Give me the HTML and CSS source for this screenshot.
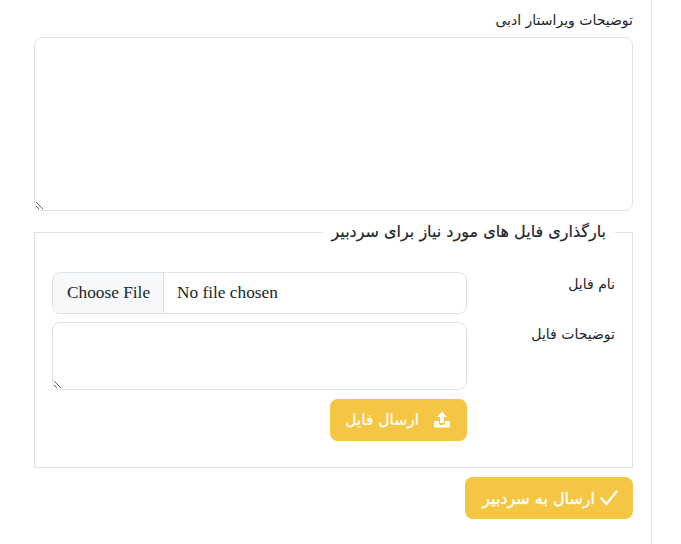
FILE: index.html
```html
<!DOCTYPE html>
<html lang="fa" dir="rtl">
<head>
    <meta charset="UTF-8">
    <title>ارسال به سردبیر</title>
    <link rel="stylesheet" href="styles.css">
</head>
<body>
    <div class="panel">
        <label class="main-label" for="notes">توضیحات ویراستار ادبی</label>
        <textarea class="main-notes" id="notes"></textarea>

        <fieldset class="upload-box">
            <legend>بارگذاری فایل های مورد نیاز برای سردبیر</legend>

            <div class="upload-row">
                <label for="file-name">نام فایل</label>
                <input type="file" id="file-name" dir="ltr">
            </div>
            <div class="upload-row upload-row-notes">
                <label for="file-notes">توضیحات فایل</label>
                <textarea id="file-notes"></textarea>
            </div>
            <div class="upload-row upload-row-btn">
                <span></span>
                <div>
                    <button type="button" class="btn btn-upload">
                        <svg width="18" height="18" viewBox="0 0 18 18"><path fill="#fff" d="M9 0.500 14 6H11V12H7V6H4ZM1 11.500C1 10.700 1.700 10 2.500 10H6V12.500C6 13.300 6.700 14 7.500 14H10.500C11.300 14 12 13.300 12 12.500V10H15.500C16.300 10 17 10.700 17 11.500V15C17 15.800 16.300 16.500 15.500 16.500H2.500C1.700 16.500 1 15.800 1 15Z"/></svg>
                        <span>ارسال فایل</span>
                    </button>
                </div>
            </div>
        </fieldset>

        <div class="send-row">
            <button type="button" class="btn btn-send">
                <svg width="18" height="16" viewBox="0 0 18 16"><path fill="none" stroke="#fff" stroke-width="2.400" stroke-linecap="round" d="M1.500 8.500 6.500 14 16.500 1.500"/></svg>
                <span>ارسال به سردبیر</span>
            </button>
        </div>
    </div>
</body>
</html>
```

FILE: styles.css
```css
/* base */
html, body {
    height: 544px;
    overflow: hidden;
}
body {
    margin: 0;
    background-color: #fff;
    color: #212529;
    font-family: "DejaVu Sans", "Noto Sans", sans-serif;
    font-size: 14px;
}
.panel {
    box-sizing: border-box;
    width: 652px;
    height: 544px;
    margin-left: 0;
    margin-right: auto;
    padding: 12px 18px 0 34px;
    border-right: 1px solid #e2e2e2;
    display: flex;
    flex-direction: column;
    align-items: stretch;
}
.main-label {
    display: block;
    height: 25px;
    line-height: 17px;
    font-size: 14px;
}
textarea {
    display: block;
    box-sizing: border-box;
    width: 100%;
    border: 1px solid #dee2e6;
    border-radius: 8px;
    background-color: #fff;
    outline: none;
}
.main-notes {
    height: 174px;
}
/* upload */
.upload-box {
    box-sizing: border-box;
    height: 247px;
    margin: 10px 0 0 0;
    padding: 29px 17px 0 17px;
    border: 1px solid #dee2e6;
    min-inline-size: 0;
}
.upload-box legend {
    margin-right: 0;
    padding: 0 9px;
    font-size: 16px;
    line-height: 22px;
    -webkit-text-stroke: 0.2px #212529;
}
.upload-row {
    display: grid;
    grid-template-columns: 148px 415px;
}
.upload-row label {
    padding-top: 4px;
    font-size: 14px;
    line-height: 17px;
}
.upload-row-notes {
    margin-top: 8px;
}
.upload-row-notes textarea {
    height: 68px;
}
.upload-row-btn {
    margin-top: 9px;
}
input[type="file"] {
    box-sizing: border-box;
    width: 100%;
    height: 42px;
    padding: 0;
    border: 1px solid #dee2e6;
    border-radius: 8px;
    background-color: #fff;
    color: #212529;
    font-family: "Liberation Serif", serif;
    font-size: 17.300px;
    line-height: 40px;
}
input[type="file"]::file-selector-button {
    height: 40px;
    margin: 0 13px 0 0;
    padding: 0 13px 0 14px;
    border: none;
    border-right: 1px solid #dee2e6;
    background-color: #f6f8fa;
    color: #212529;
    font: inherit;
}
/* buttons */
.btn {
    display: flex;
    align-items: center;
    box-sizing: border-box;
    height: 42px;
    border: none;
    border-radius: 8px;
    background-color: #f4c644;
    color: #fff;
    font-family: inherit;
    cursor: pointer;
}
.btn-upload {
    width: 137px;
    padding: 0 16px 0 0;
    gap: 14px;
    font-size: 15.500px;
    -webkit-text-stroke: 0.2px #fff;
}
.send-row {
    display: flex;
    justify-content: flex-start;
    margin-top: 9px;
}
.btn-send {
    width: 168px;
    padding: 0 15px 0 0;
    gap: 5px;
    font-size: 16px;
    -webkit-text-stroke: 0.3px #fff;
}
```
